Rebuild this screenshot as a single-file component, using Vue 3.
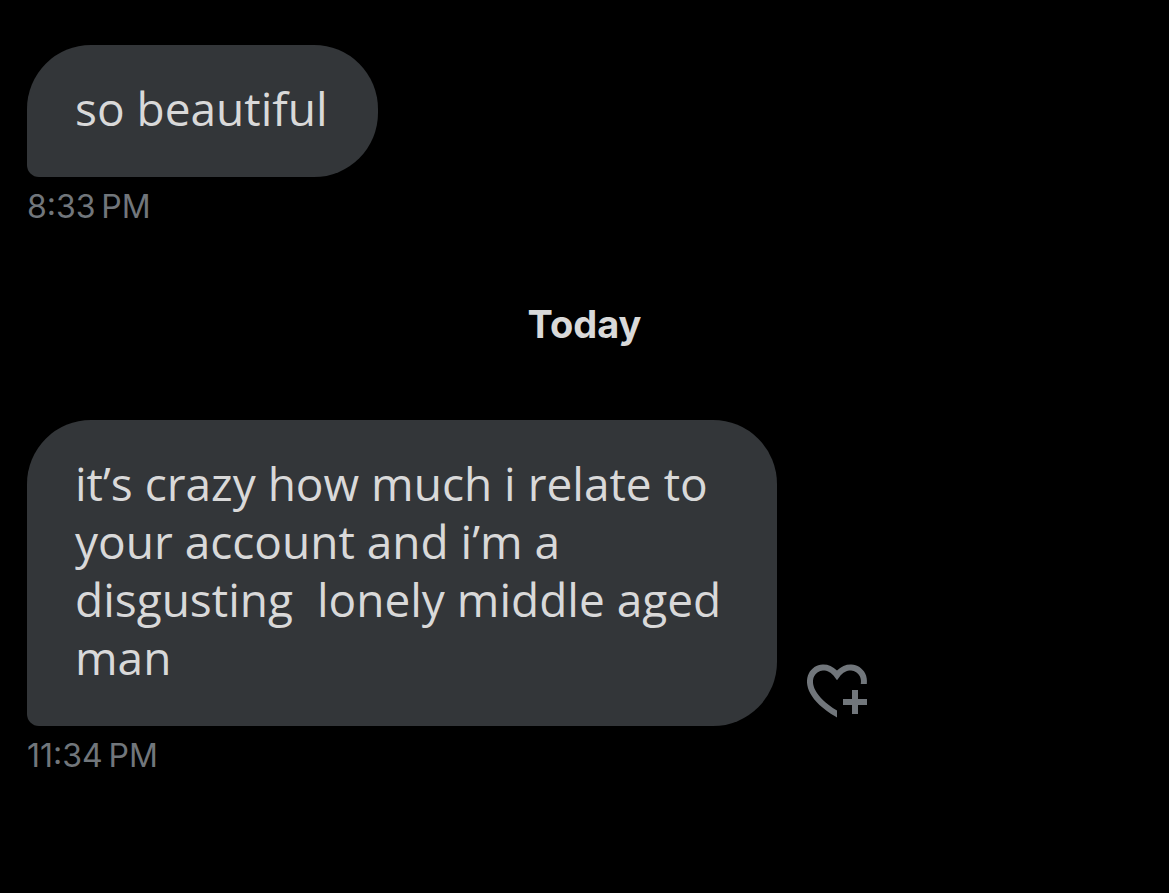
<script setup>
const first = { text: 'so beautiful', time: '8:33\u202fPM' }
const second = {
  text: 'it’s crazy how much i relate to\nyour account and i’m a\ndisgusting  lonely middle aged\nman',
  time: '11:34\u202fPM',
}
</script>

<template>
  <main class="chat">
    <article class="message">
      <div class="row">
        <p class="bubble">{{ first.text }}</p>
      </div>
      <time class="time">{{ first.time }}</time>
    </article>
    <h2 class="day">Today</h2>
    <article class="message">
      <div class="row">
        <p class="bubble long">{{ second.text }}</p>
        <button class="react" type="button" aria-label="Add reaction">
          <svg viewBox="0 0 24 24" width="72" height="72" fill="currentColor" aria-hidden="true">
            <path
              d="M17 12v3h-2.998v2h3v3h2v-3h3v-2h-3v-3H17zm-5 6.839c-3.871-2.34-6.053-4.639-7.127-6.609-1.112-2.04-1.031-3.7-.479-4.82.561-1.13 1.667-1.84 2.91-1.91 1.222-.06 2.68.51 3.892 2.16l.806 1.09.805-1.09c1.211-1.65 2.668-2.22 3.89-2.16 1.242.07 2.347.78 2.908 1.91.334.677.49 1.554.321 2.59h2.011c.153-1.283-.039-2.469-.539-3.48-.887-1.79-2.647-2.91-4.601-3.01-1.65-.09-3.367.56-4.796 2.01-1.43-1.45-3.147-2.1-4.798-2.01-1.954.1-3.714 1.22-4.601 3.01-.896 1.81-.846 4.17.514 6.67 1.353 2.48 4.003 5.12 8.382 7.67l.502.299v-2.32z"
            />
          </svg>
        </button>
      </div>
      <time class="time">{{ second.time }}</time>
    </article>
  </main>
</template>

<style>
body {
  margin: 0;
  background: #000;
}
</style>

<style scoped>
.chat {
  box-sizing: border-box;
  min-height: 100vh;
  padding: 45px 27px;
  background: #000;
  color: #d9d9d9;
  font-family: Inter, "Liberation Sans", sans-serif;
}
.row {
  display: flex;
  align-items: flex-end;
  gap: 24px;
}
.bubble {
  margin: 0;
  padding: 34px 50px 40px 48px;
  border-radius: 64px 64px 64px 12px;
  background: #333639;
  font-family: "Open Sans", "Noto Sans", sans-serif;
  font-size: 46px;
  line-height: 58px;
  white-space: pre-wrap;
}
.long {
  padding-right: 56px;
}
.time {
  display: block;
  margin-top: 8px;
  color: #71767b;
  font-size: 32px;
  line-height: 44px;
}
.day {
  margin: 70px 0 71px;
  font-size: 38px;
  font-weight: 700;
  line-height: 50px;
  text-align: center;
}
.react {
  display: flex;
  margin: 0;
  padding: 0;
  border: 0;
  background: none;
  color: #71767b;
}
</style>
